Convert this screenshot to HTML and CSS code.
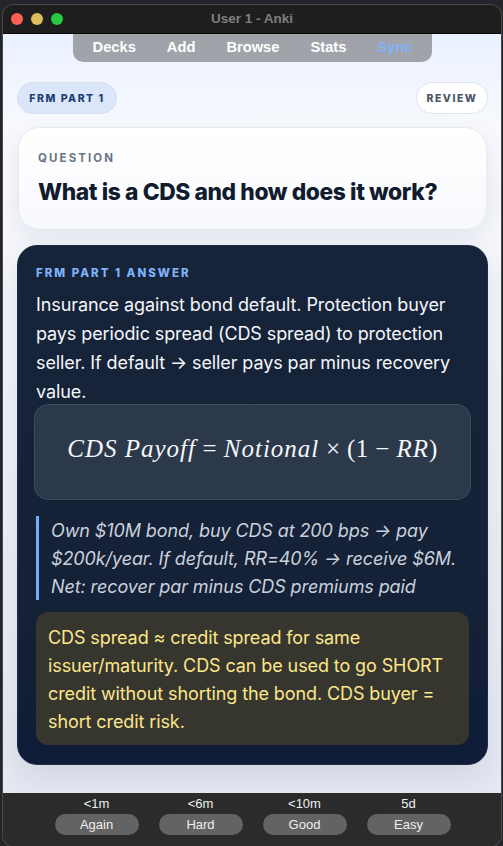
FILE: index.html
```html
<!DOCTYPE html>
<html lang="en">
<head>
    <meta charset="UTF-8">
    <title>User 1 - Anki</title>
    <link rel="stylesheet" href="styles.css">
</head>
<body>
    <div class="window">
        <div class="titlebar">
            <div class="lights">
                <span class="light red"></span>
                <span class="light yellow"></span>
                <span class="light green"></span>
            </div>
            <div class="title">User 1 - Anki</div>
        </div>

        <div class="content">
            <!-- top menu -->
            <div class="nav">
                <span>Decks</span>
                <span>Add</span>
                <span>Browse</span>
                <span>Stats</span>
                <span class="sync">Sync</span>
            </div>

            <div class="chips">
                <span class="chip chip-deck">FRM PART 1</span>
                <span class="chip chip-review">REVIEW</span>
            </div>

            <div class="question-card">
                <div class="question-label">QUESTION</div>
                <div class="question-text">What is a CDS and how does it work?</div>
            </div>

            <div class="answer-card">
                <div class="answer-label">FRM PART 1 ANSWER</div>
                <div class="answer-text">Insurance against bond default. Protection buyer pays periodic spread (CDS spread) to protection seller. If default → seller pays par minus recovery value.</div>
                <div class="formula"><i class="math-var">CDS Payoff</i> = <i class="math-var">Notional</i> × (1 − <i class="math-var">RR</i>)</div>
                <div class="example">Own $10M bond, buy CDS at 200 bps → pay $200k/year. If default, RR=40% → receive $6M. Net: recover par minus CDS premiums paid</div>
                <div class="callout">CDS spread ≈ credit spread for same issuer/maturity. CDS can be used to go SHORT credit without shorting the bond. CDS buyer = short credit risk.</div>
            </div>
        </div>

        <!-- answer buttons -->
        <div class="footer">
            <div class="ease">
                <span class="due">&lt;1m</span>
                <button class="btn">Again</button>
            </div>
            <div class="ease">
                <span class="due">&lt;6m</span>
                <button class="btn">Hard</button>
            </div>
            <div class="ease">
                <span class="due">&lt;10m</span>
                <button class="btn">Good</button>
            </div>
            <div class="ease">
                <span class="due">5d</span>
                <button class="btn">Easy</button>
            </div>
        </div>
    </div>
</body>
</html>
```

FILE: styles.css
```css
html, body {
    margin: 0;
    height: 100%;
}
body {
    background: #23252a;
    padding: 5px 2px 0 3px;
    box-sizing: border-box;
    overflow: hidden;
    font-family: Inter, "Liberation Sans", sans-serif;
}
.window {
    height: 841px;
    display: flex;
    flex-direction: column;
    border-radius: 10px;
    box-shadow: 0 0 0 1px #4a4a48;
    overflow: hidden;
}
.titlebar {
    height: 28px;
    flex: none;
    background: #1e1e1e;
    border-bottom: 1px solid #050505;
    display: flex;
    align-items: center;
    justify-content: center;
    position: relative;
}
.lights {
    position: absolute;
    left: 8px;
    top: 8px;
    display: flex;
    gap: 8px;
}
.light {
    width: 12px;
    height: 12px;
    border-radius: 50%;
}
.red { background: #fe5f57; }
.yellow { background: #dfbd5f; }
.green { background: #28c840; }
.title {
    margin-top: -1px;
    font-family: "Liberation Sans", sans-serif;
    font-size: 13.5px;
    font-weight: bold;
    color: #7f7f7f;
}
.content {
    flex: 1;
    min-height: 0;
    padding: 0 14px;
    background: linear-gradient(180deg, #eaf1ff 0, #f7f9fe 12%, #f1f3f9 50%, #e6e9f3 100%);
}
.nav {
    margin-left: 56px;
    width: 359px;
    height: 28px;
    box-sizing: border-box;
    padding-bottom: 2px;
    background: #a0a4aa;
    border-radius: 0 0 10px 10px;
    display: flex;
    justify-content: center;
    gap: 31px;
    align-items: center;
    font-family: "Liberation Sans", sans-serif;
    font-size: 14.7px;
    font-weight: bold;
    color: #fff;
}
.sync {
    color: #7fb2f8;
}
.chips {
    display: flex;
    justify-content: space-between;
    margin: 20px 0 13px;
}
.chip {
    height: 32px;
    box-sizing: border-box;
    display: flex;
    align-items: center;
    border-radius: 16px;
    font-size: 10.5px;
    font-weight: 800;
    letter-spacing: 1.5px;
    border: 1px solid #d4deef;
}
.chip-deck {
    width: 100px;
    justify-content: center;
    background: #dbe6fb;
    color: #1e3f74;
}
.chip-review {
    width: 72px;
    margin-right: -1px;
    justify-content: center;
    background: #fff;
    color: #4b5568;
    border-color: #e0e3ec;
}
.question-card {
    height: 103px;
    box-sizing: border-box;
    margin: 0 0 15px 1px;
    padding: 23px 19px 0;
    border: 1px solid #e6e9f2;
    border-radius: 22px;
    background: linear-gradient(180deg, #fff 0, #f8f9fd 100%);
    box-shadow: 0 8px 24px rgba(15, 28, 54, 0.08);
}
.question-label {
    font-size: 11.5px;
    font-weight: 700;
    letter-spacing: 2.1px;
    color: #6b7587;
}
.question-text {
    margin-top: 13px;
    font-size: 22.8px;
    font-weight: 800;
    letter-spacing: -0.4px;
    color: #111b2e;
}
.answer-card {
    height: 520px;
    box-sizing: border-box;
    margin-right: -1px;
    padding: 20px 18px 0;
    border: 1px solid #1d2b44;
    border-radius: 20px;
    background: linear-gradient(180deg, #16243a 0, #152136 70%, #0e1c38 100%);
    box-shadow: 0 12px 30px rgba(15, 28, 54, 0.1);
}
.answer-label {
    font-size: 11.5px;
    font-weight: 800;
    letter-spacing: 2px;
    color: #7fb2f8;
}
.answer-text {
    margin: 10px 0 -2px;
    font-size: 18px;
    letter-spacing: -0.1px;
    line-height: 29px;
    color: #f4f6fa;
}
.formula {
    margin: 0 -2px 16px;
    height: 96px;
    box-sizing: border-box;
    padding-top: 30px;
    text-align: center;
    white-space: nowrap;
    font-family: "Liberation Serif", serif;
    font-size: 25px;
    letter-spacing: 0.4px;
    color: #f4f6fa;
    background: #2c394b;
    border: 1px solid #3d4a5e;
    border-radius: 14px;
}
.math-var {
    letter-spacing: 1px;
}
.example {
    height: 84px;
    box-sizing: border-box;
    margin-bottom: 12px;
    padding: 1px 0 0 12px;
    border-left: 3px solid #74aef8;
    font-size: 18px;
    font-style: italic;
    letter-spacing: -0.1px;
    line-height: 28px;
    color: #c9d1dd;
}
.callout {
    height: 133px;
    box-sizing: border-box;
    padding: 12px 12px;
    background: #36362f;
    border-radius: 12px;
    font-size: 18px;
    letter-spacing: -0.1px;
    line-height: 28px;
    color: #fde68a;
}
.footer {
    height: 53px;
    flex: none;
    background: #2b2b2b;
    display: flex;
    justify-content: center;
    gap: 20px;
    padding-left: 1px;
    box-sizing: border-box;
}
.ease {
    width: 84px;
    display: flex;
    flex-direction: column;
    align-items: center;
}
.due {
    margin-top: 1px;
    height: 20px;
    line-height: 19px;
    font-family: "Liberation Sans", sans-serif;
    font-size: 13px;
    color: #f0f0f0;
}
.btn {
    width: 84px;
    height: 21px;
    padding: 0;
    border: none;
    border-radius: 11px;
    background: #636363;
    font-family: "Liberation Sans", sans-serif;
    font-size: 13px;
    color: #eee;
}
```
